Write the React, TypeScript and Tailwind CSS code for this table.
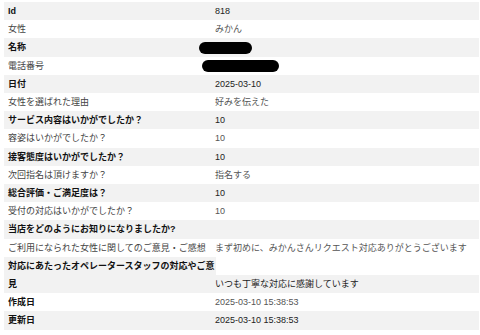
import React from "react";

type Row = {
  label: string;
  value?: React.ReactNode;
  bold?: boolean;
};

// black pill used to hide personal data
const Redacted: React.FC<{ className: string }> = ({ className }) => (
  <span className={`inline-block h-[12px] rounded-full bg-black align-middle ${className}`} />
);

const rows: Row[] = [
  { label: "Id", value: "818", bold: true },
  { label: "女性", value: "みかん" },
  { label: "名称", value: <Redacted className="w-[53px] -ml-[16px]" />, bold: true },
  { label: "電話番号", value: <Redacted className="w-[77px] -ml-[13px]" /> },
  { label: "日付", value: "2025-03-10", bold: true },
  { label: "女性を選ばれた理由", value: "好みを伝えた" },
  { label: "サービス内容はいかがでしたか？", value: "10", bold: true },
  { label: "容姿はいかがでしたか？", value: "10" },
  { label: "接客態度はいかがでしたか？", value: "10", bold: true },
  { label: "次回指名は頂けますか？", value: "指名する" },
  { label: "総合評価・ご満足度は？", value: "10", bold: true },
  { label: "受付の対応はいかがでしたか？", value: "10" },
  { label: "当店をどのようにお知りになりましたか?", value: "", bold: true },
  { label: "ご利用になられた女性に関してのご意見・ご感想", value: "まず初めに、みかんさんリクエスト対応ありがとうございます" },
];

const tail: Row[] = [
  { label: "作成日", value: "2025-03-10 15:38:53", bold: true },
  { label: "更新日", value: "2025-03-10 15:38:53", bold: true },
];

const TableRow: React.FC<{ row: Row; shaded: boolean }> = ({ row, shaded }) => (
  <div className={`grid grid-cols-[212px_1fr] ${shaded ? "bg-[#f2f2f2]" : "bg-white"}`}>
    <div
      className={`pl-[4px] whitespace-nowrap ${
        row.bold ? "font-bold text-[#111]" : "text-[#444]"
      }`}
    >
      {row.label}
    </div>
    <div className={`-ml-[1px] whitespace-nowrap ${shaded ? "text-[#222]" : "text-[#555]"}`}>{row.value}</div>
  </div>
);

export default function App() {
  return (
    <div
      className="w-[480px] h-[335px] bg-white pt-[2px] pl-[4px] pr-[1px] text-[9px] leading-[18.2px]"
      style={{ fontFamily: '"Liberation Sans", "Noto Sans CJK JP", sans-serif' }}
    >
      {rows.map((row, i) => (
        <TableRow key={row.label} row={row} shaded={i % 2 === 0} />
      ))}

      {/* long label wraps onto two lines; answer sits on the second */}
      <div className="grid grid-cols-[212px_1fr] bg-white">
        <div className="pl-[4px] bg-[#f2f2f2] font-bold text-[#111]">
          対応にあたったオペレータースタッフの対応やご意見
        </div>
        <div className="flex flex-col">
          <div className="h-[18.2px]" />
          <div className="-ml-[1px] bg-[#f2f2f2] text-[#222] whitespace-nowrap">いつも丁寧な対応に感謝しています</div>
        </div>
      </div>

      {tail.map((row, i) => (
        <TableRow key={row.label} row={row} shaded={i % 2 === 1} />
      ))}
    </div>
  );
}
